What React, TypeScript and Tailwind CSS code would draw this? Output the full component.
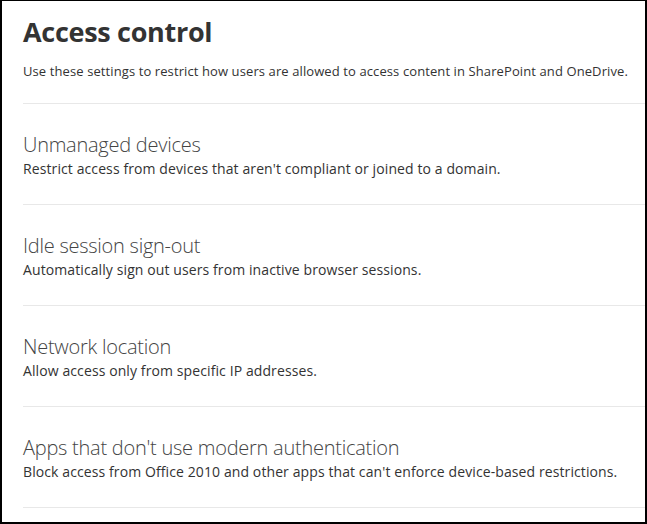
const sections = [
  {
    title: "Unmanaged devices",
    description: "Restrict access from devices that aren't compliant or joined to a domain.",
  },
  {
    title: "Idle session sign-out",
    description: "Automatically sign out users from inactive browser sessions.",
  },
  {
    title: "Network location",
    description: "Allow access only from specific IP addresses.",
  },
  {
    title: "Apps that don't use modern authentication",
    description: "Block access from Office 2010 and other apps that can't enforce device-based restrictions.",
  },
]

export default function App() {
  return (
    <div
      className="w-[647px] h-[524px] overflow-hidden bg-white border-black border-t border-l-2 border-r-2 border-b-2 text-[#333]"
      style={{ fontFamily: '"Open Sans", "Noto Sans", sans-serif' }}
    >
      <div className="pl-[21px]">
        <div className="pt-[13px] pb-[23px] border-b border-[#e8e8e8]">
          <h1 className="text-[27px] leading-[36px] font-bold tracking-[-0.3px]">Access control</h1>
          <p className="mt-[12px] text-[13px] leading-[18px] tracking-[0.1px]">
            Use these settings to restrict how users are allowed to access content in SharePoint and OneDrive.
          </p>
        </div>
        {sections.map((s) => (
          <div key={s.title} className="pt-[27px] pb-[25px] border-b border-[#e8e8e8]">
            <h2 className="text-[20px] leading-[28px] font-light text-[#444] tracking-[-0.25px]">{s.title}</h2>
            <p className="text-[14px] leading-[20px] tracking-[0.1px]">{s.description}</p>
          </div>
        ))}
      </div>
    </div>
  )
}
